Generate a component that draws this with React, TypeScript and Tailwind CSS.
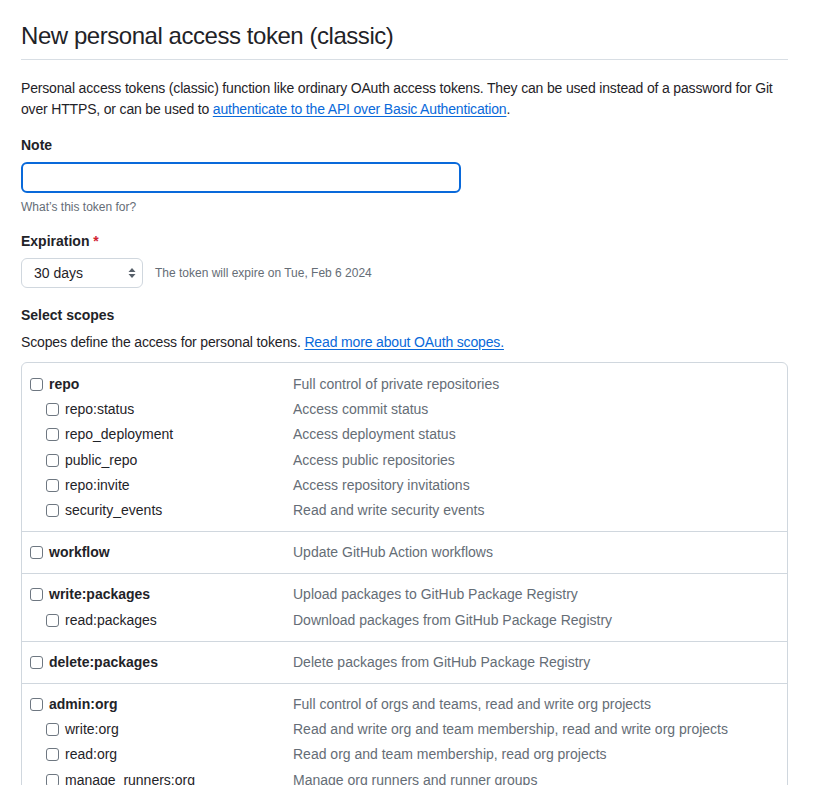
import React from "react";

type Scope = { name: string; desc: string; sub?: boolean };

const groups: Scope[][] = [
  [
    { name: "repo", desc: "Full control of private repositories" },
    { name: "repo:status", desc: "Access commit status", sub: true },
    { name: "repo_deployment", desc: "Access deployment status", sub: true },
    { name: "public_repo", desc: "Access public repositories", sub: true },
    { name: "repo:invite", desc: "Access repository invitations", sub: true },
    { name: "security_events", desc: "Read and write security events", sub: true },
  ],
  [{ name: "workflow", desc: "Update GitHub Action workflows" }],
  [
    { name: "write:packages", desc: "Upload packages to GitHub Package Registry" },
    { name: "read:packages", desc: "Download packages from GitHub Package Registry", sub: true },
  ],
  [{ name: "delete:packages", desc: "Delete packages from GitHub Package Registry" }],
  [
    { name: "admin:org", desc: "Full control of orgs and teams, read and write org projects" },
    { name: "write:org", desc: "Read and write org and team membership, read and write org projects", sub: true },
    { name: "read:org", desc: "Read org and team membership, read org projects", sub: true },
    { name: "manage_runners:org", desc: "Manage org runners and runner groups", sub: true },
  ],
];

function Box() {
  return <span className="inline-block w-[13px] h-[13px] border border-[#6e7781] rounded-[3px] bg-white shrink-0" />;
}

export default function App() {
  return (
    <div
      className="bg-white text-[#1f2328] text-[14px] leading-[21px] px-[21px] pt-[21px] w-[830px] h-[785px] overflow-hidden"
      style={{ fontFamily: '"Liberation Sans", Arial, sans-serif' }}
    >
      <div className="w-[767px]">
        <div className="pb-[8px] border-b border-[#d8dee4]">
          <h1 className="text-[24px] leading-[30px] font-normal tracking-[-0.45px]">New personal access token (classic)</h1>
        </div>
        <p className="mt-[18px] tracking-[-0.17px]">
          <span className="whitespace-nowrap">
            Personal access tokens (classic) function like ordinary OAuth access tokens. They can be used instead of a password for Git
          </span>
          <br />
          over HTTPS, or can be used to{" "}
          <a className="text-[#0969da] underline underline-offset-2">authenticate to the API over Basic Authentication</a>.
        </p>

        <label className="block mt-[15px] font-semibold">Note</label>
        <div className="mt-[6px] w-[440px] h-[31px] border-2 border-[#0969da] rounded-[6px]" />
        <div className="mt-[5px] text-[12px] leading-[18px] text-[#656d76]">What’s this token for?</div>

        <div className="mt-[15px] font-semibold">
          Expiration <span className="text-[#d1242f]">*</span>
        </div>
        <div className="mt-[6px] flex items-center gap-[12px]">
          <div className="w-[122px] h-[30px] border border-[#d0d7de] rounded-[6px] flex items-center justify-between pl-[12px] pr-[6px]">
            <span>30 days</span>
            <svg width="8" height="12" viewBox="0 0 8 12">
              <path d="M4 1 L7.5 5 H0.5 Z" fill="#57606a" />
              <path d="M4 11 L7.5 7 H0.5 Z" fill="#57606a" />
            </svg>
          </div>
          <span className="text-[12px] text-[#656d76]">The token will expire on Tue, Feb 6 2024</span>
        </div>

        <div className="mt-[17px] font-semibold">Select scopes</div>
        <p className="mt-[6px] tracking-[-0.15px]">
          Scopes define the access for personal tokens.{" "}
          <a className="text-[#0969da] underline underline-offset-2">Read more about OAuth scopes.</a>
        </p>

        <div className="mt-[9px] border border-[#d0d7de] rounded-[6px]">
          {groups.map((g, gi) => (
            <div key={gi} className={gi > 0 ? "py-[8px] border-t border-[#d0d7de]" : "pt-[9px] pb-[8px]"}>
              {g.map((s) => (
                <div key={s.name} className="flex items-center h-[25.2px]">
                  <div className={`w-[271px] flex items-center gap-[6px] ${s.sub ? "pl-[24px]" : "pl-[8px]"}`}>
                    <Box />
                    <span className={s.sub ? "" : "font-semibold"}>{s.name}</span>
                  </div>
                  <span className="text-[#656d76]">{s.desc}</span>
                </div>
              ))}
            </div>
          ))}
        </div>
      </div>
    </div>
  );
}
